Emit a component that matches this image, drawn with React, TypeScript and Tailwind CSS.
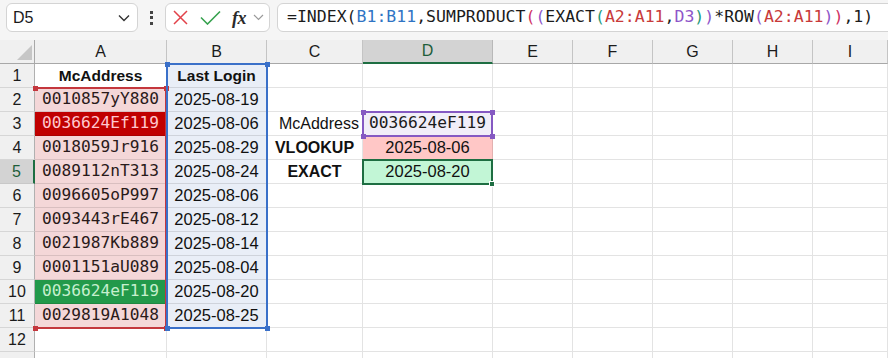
import React from "react";

const COLS = ["A", "B", "C", "D", "E", "F", "G", "H", "I"];

const colA = [
  "0010857yY880",
  "0036624Ef119",
  "0018059Jr916",
  "0089112nT313",
  "0096605oP997",
  "0093443rE467",
  "0021987Kb889",
  "0001151aU089",
  "0036624eF119",
  "0029819A1048",
];
const colB = [
  "2025-08-19",
  "2025-08-06",
  "2025-08-29",
  "2025-08-24",
  "2025-08-06",
  "2025-08-12",
  "2025-08-14",
  "2025-08-04",
  "2025-08-20",
  "2025-08-25",
];

const mono = "font-['DejaVu_Sans_Mono','Liberation_Mono',monospace]";
const sans = "font-['Liberation_Sans',Arial,sans-serif]";

type Tok = [string, string];
const formula: Tok[] = [
  ["=INDEX(", "text-[#1b1b1b]"],
  ["B1:B11", "text-[#2f74c4]"],
  [",SUMPRODUCT", "text-[#1b1b1b]"],
  ["(", "text-[#cf3062]"],
  ["(", "text-[#8d55c9]"],
  ["EXACT", "text-[#1b1b1b]"],
  ["(", "text-[#1f9a7a]"],
  ["A2:A11", "text-[#c83a3a]"],
  [",", "text-[#1b1b1b]"],
  ["D3", "text-[#8d55c9]"],
  [")", "text-[#1f9a7a]"],
  [")", "text-[#8d55c9]"],
  ["*ROW", "text-[#1b1b1b]"],
  ["(", "text-[#8d55c9]"],
  ["A2:A11", "text-[#c83a3a]"],
  [")", "text-[#8d55c9]"],
  [")", "text-[#cf3062]"],
  [",1)", "text-[#1b1b1b]"],
];

function Handle({ cls, pos }: { cls: string; pos: string }) {
  return <div className={`absolute w-[5px] h-[5px] ${cls} ${pos}`} />;
}

function RangeBox({
  left,
  top,
  width,
  height,
  border,
  handle,
}: {
  left: number;
  top: number;
  width: number;
  height: number;
  border: string;
  handle: string;
}) {
  return (
    <div
      className={`absolute pointer-events-none border-2 ${border}`}
      style={{ left, top, width, height }}
    >
      <Handle cls={handle} pos="-left-[3.5px] -top-[3.5px]" />
      <Handle cls={handle} pos="-right-[3.5px] -top-[3.5px]" />
      <Handle cls={handle} pos="-left-[3.5px] -bottom-[3.5px]" />
      <Handle cls={handle} pos="-right-[3.5px] -bottom-[3.5px]" />
    </div>
  );
}

function cellContent(r: number, c: number): { node: React.ReactNode; cls: string } {
  const base = "border-r border-b border-black/[0.11]";
  if (c === 0) {
    if (r === 1)
      return {
        node: <span className={`${sans} font-bold text-[15.5px] text-[#111]`}>McAddress</span>,
        cls: `${base} bg-white justify-center`,
      };
    if (r >= 2 && r <= 11) {
      const v = colA[r - 2];
      if (r === 3)
        return {
          node: <span className={`${mono} text-[16.2px] text-[#ffc7ce]`}>{v}</span>,
          cls: `${base} bg-[#c00000] justify-center`,
        };
      if (r === 10)
        return {
          node: <span className={`${mono} text-[16.2px] text-[#c6efce]`}>{v}</span>,
          cls: `${base} bg-[#22994a] justify-center`,
        };
      return {
        node: <span className={`${mono} text-[16.2px] text-[#2a1a1a]`}>{v}</span>,
        cls: `${base} bg-[#f4d7d8] justify-center`,
      };
    }
  }
  if (c === 1) {
    if (r === 1)
      return {
        node: <span className={`${sans} font-bold text-[15.5px] text-[#111]`}>Last Login</span>,
        cls: `${base} bg-[#e9eef7] justify-center`,
      };
    if (r >= 2 && r <= 11)
      return {
        node: <span className={`${sans} text-[16.5px] text-[#111]`}>{colB[r - 2]}</span>,
        cls: `${base} bg-[#e9eef7] justify-center`,
      };
  }
  if (c === 2) {
    if (r === 3)
      return {
        node: <span className={`${sans} text-[16px] text-[#111] whitespace-nowrap`}>McAddress</span>,
        cls: `${base} justify-end pr-[3px]`,
      };
    if (r === 4)
      return {
        node: <span className={`${sans} font-bold text-[16px] text-[#111]`}>VLOOKUP</span>,
        cls: `${base} justify-center`,
      };
    if (r === 5)
      return {
        node: <span className={`${sans} font-bold text-[16px] text-[#111]`}>EXACT</span>,
        cls: `${base} justify-center`,
      };
  }
  if (c === 3) {
    if (r === 3)
      return {
        node: <span className={`${mono} text-[16.2px] text-[#1b1b1b]`}>0036624eF119</span>,
        cls: `${base} bg-[#f1eef8] justify-center`,
      };
    if (r === 4)
      return {
        node: <span className={`${sans} text-[16.5px] text-[#111]`}>2025-08-06</span>,
        cls: `${base} bg-[#ffc7c6] justify-center`,
      };
    if (r === 5)
      return {
        node: <span className={`${sans} text-[16.5px] text-[#111]`}>2025-08-20</span>,
        cls: `${base} bg-[#c2f6d6] justify-center`,
      };
  }
  return { node: null, cls: `${base}` };
}

export default function App() {
  const rows = Array.from({ length: 13 }, (_, i) => i + 1);
  return (
    <div className={`w-[888px] h-[358px] overflow-hidden bg-white ${sans}`}>
      {/* Formula bar */}
      <div className="h-[40px] bg-[#f5f5f5] flex items-start pt-[3px] pl-[6px]">
        <div className="w-[132px] h-[29px] rounded-[6px] border border-[#d4d4d4] bg-white flex items-center pl-[6px] pr-[6px]">
          <span className="text-[16px] text-[#1b1b1b] flex-1">D5</span>
          <svg width="12" height="8" viewBox="0 0 12 8" className="mr-[1px]">
            <path d="M1 1.5 L6 6.5 L11 1.5" fill="none" stroke="#333" strokeWidth="1.4" />
          </svg>
        </div>
        <div className="w-[27px] h-[29px] flex flex-col items-center justify-center gap-[2.5px]">
          <div className="w-[3px] h-[3px] bg-[#444]" />
          <div className="w-[3px] h-[3px] bg-[#444]" />
          <div className="w-[3px] h-[3px] bg-[#444]" />
        </div>
        <div className="w-[105px] h-[29px] rounded-[6px] border border-[#d4d4d4] bg-white flex items-center pl-[7px]">
          <svg width="15" height="15" viewBox="0 0 15 15">
            <path d="M1 1 L14 14 M14 1 L1 14" stroke="#e2424a" strokeWidth="1.5" fill="none" />
          </svg>
          <svg width="21" height="15" viewBox="0 0 21 15" className="ml-[12px]">
            <path d="M1 7.5 L7.5 14 L20 1.5" stroke="#37a24f" strokeWidth="1.6" fill="none" />
          </svg>
          <span className="ml-[11px] font-['Liberation_Serif',serif] italic font-bold text-[18px] text-[#2a2a2a] leading-none tracking-[-0.5px]">
            fx
          </span>
          <svg width="11" height="7" viewBox="0 0 11 7" className="ml-[7px]">
            <path d="M1 1 L5.5 5.5 L10 1" fill="none" stroke="#9a9a9a" strokeWidth="1.2" />
          </svg>
        </div>
        <div className="ml-[7px] flex-1 -mr-[10px] h-[29px] rounded-[6px] border border-[#d4d4d4] bg-white flex items-center pl-[9px]">
          <span className={`${mono} text-[16.5px] whitespace-nowrap`}>
            {formula.map(([t, c], i) => (
              <span key={i} className={c}>
                {t}
              </span>
            ))}
          </span>
        </div>
      </div>

      {/* Grid */}
      <div className="relative">
        <div className="grid grid-cols-[35px_132px_100px_96px_130px_80px_80px_80px_80px_75px] auto-rows-[24px]">
          {/* header row */}
          <div className="bg-[#f0f0f0] border-r border-b border-[#a8a8a8] relative">
            <svg width="16" height="16" viewBox="0 0 16 16" className="absolute left-[17px] top-[5px]">
              <path d="M15 0 L15 15 L0 15 Z" fill="#c6c6c6" />
            </svg>
          </div>
          {COLS.map((c) =>
            c === "D" ? (
              <div
                key={c}
                className="bg-[#d3d3d3] border-r border-[#b8b8b8] border-b-2 border-b-[#1e6e42] flex items-center justify-center text-[16px] text-[#1e5e3a]"
              >
                {c}
              </div>
            ) : (
              <div
                key={c}
                className="bg-[#f0f0f0] border-r border-[#c4c4c4] border-b border-b-[#a8a8a8] flex items-center justify-center text-[16px] text-[#1b1b1b]"
              >
                {c}
              </div>
            )
          )}
          {rows.map((r) => (
            <React.Fragment key={r}>
              {r === 5 ? (
                <div className="bg-[#d3d3d3] border-r-2 border-r-[#1e6e42] border-b border-b-[#c8c8c8] flex items-center justify-center text-[16px] text-[#1e5e3a]">
                  {r}
                </div>
              ) : (
                <div className="bg-[#f0f0f0] border-r border-r-[#b0b0b0] border-b border-b-[#d6d6d6] flex items-center justify-center text-[16px] text-[#1b1b1b]">
                  {r <= 12 ? r : ""}
                </div>
              )}
              {COLS.map((_, ci) => {
                const { node, cls } = cellContent(r, ci);
                return (
                  <div key={ci} className={`flex items-center overflow-visible whitespace-nowrap ${cls}`}>
                    {node}
                  </div>
                );
              })}
            </React.Fragment>
          ))}
        </div>

        {/* Range overlays */}
        <div
          className="absolute pointer-events-none border-2 border-l-0 border-[#c4373d]"
          style={{ left: 35, top: 47, width: 132, height: 242 }}
        >
          <Handle cls="bg-[#c4373d]" pos="-left-[2.5px] -top-[3.5px]" />
          <Handle cls="bg-[#c4373d]" pos="-right-[3.5px] -top-[3.5px]" />
          <Handle cls="bg-[#c4373d]" pos="-left-[2.5px] -bottom-[3.5px]" />
          <Handle cls="bg-[#c4373d]" pos="-right-[3.5px] -bottom-[3.5px]" />
        </div>
        <RangeBox left={166} top={23} width={102} height={266} border="border-[#3a70c9]" handle="bg-[#3a70c9]" />
        <RangeBox left={362} top={71} width={131} height={26} border="border-[#8559c2]" handle="bg-[#8559c2]" />
        <div
          className="absolute pointer-events-none border-2 border-[#1e6e42]"
          style={{ left: 362, top: 119, width: 131, height: 26 }}
        >
          <div className="absolute -right-[4px] -bottom-[4px] w-[6px] h-[6px] bg-[#1e6e42] border border-white" />
        </div>
      </div>
    </div>
  );
}
